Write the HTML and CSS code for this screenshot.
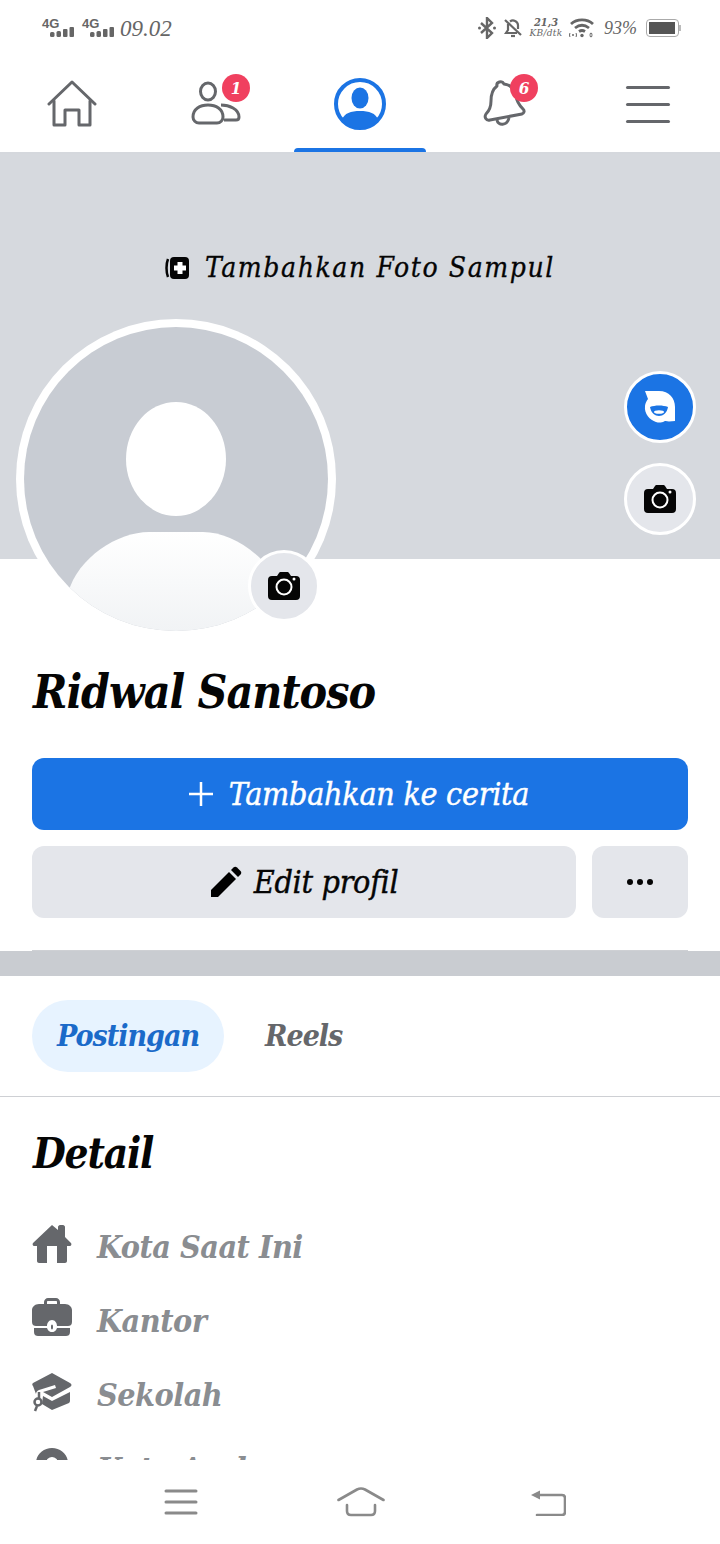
FILE: index.html
```html
<!DOCTYPE html>
<html lang="en">
<head>
  <meta charset="UTF-8">
  <title>Ridwal Santoso</title>
  <link rel="stylesheet" href="styles.css">
</head>
<body>

  <div class="screen">
    <div class="content">

      <div class="status-bar">
        <div class="status-left">
          <div class="sim"><span class="sim-label">4G</span>
            <svg class="sim-bars" width="24" height="10" viewBox="0 0 24 10"><rect x="0" y="5" width="4.500" height="5" rx="1.500"/><rect x="6.500" y="4" width="4.500" height="6" rx="1.500"/><rect x="13" y="2" width="4.500" height="8" rx="1"/><rect x="19.500" y="0" width="4.500" height="10" rx="1"/></svg>
          </div>
          <div class="sim"><span class="sim-label">4G</span>
            <svg class="sim-bars" width="24" height="10" viewBox="0 0 24 10"><rect x="0" y="5" width="4.500" height="5" rx="1.500"/><rect x="6.500" y="4" width="4.500" height="6" rx="1.500"/><rect x="13" y="2" width="4.500" height="8" rx="1"/><rect x="19.500" y="0" width="4.500" height="10" rx="1"/></svg>
          </div>
          <span class="clock">09.02</span>
        </div>
        <div class="status-right">
          <svg width="18" height="22" viewBox="0 0 18 22" fill="none" stroke="#666" stroke-width="2.400"><path d="M3 6l11 10-5 5V1l5 5L3 16"/><circle cx="1.500" cy="11" r="1.500" fill="#666" stroke="none"/><circle cx="16.500" cy="11" r="1.500" fill="#666" stroke="none"/></svg>
          <svg width="18" height="20" viewBox="0 0 18 20" fill="none" stroke="#666" stroke-width="2.200"><path d="M4 6v6l-2 3h11M6 3.500A5 5 0 0 1 14 7v4"/><path d="M1 2l16 15"/><path d="M7 18h4"/></svg>
          <div class="speed"><span>21,3</span><span>KB/dtk</span></div>
          <svg width="26" height="20" viewBox="0 0 26 20" fill="none" stroke="#666" stroke-width="2.800"><path d="M2 6C8 .5 18 .5 24 6"/><path d="M6 10c4.500-3.500 9.500-3.500 14 0"/><path d="M10 13.500c2-1.300 4-1.300 6 0"/><circle cx="13" cy="17.500" r="1.700" fill="#666" stroke="none"/><circle cx="4" cy="17" r="1" fill="#666" stroke="none"/><path d="M1 15c-.6 1.300-.6 2.700 0 4M7 15c.6 1.300.6 2.700 0 4" stroke-width="1"/><path d="M22 14.500l2 2h-4zM22 19.500l2-2h-4z" fill="#666" stroke="none"/></svg>
          <span class="battery-text">93%</span>
          <div class="battery"><div class="battery-fill"></div></div>
        </div>
      </div>

      <nav class="top-nav">
        <div class="nav-item">
          <svg width="50" height="48" viewBox="0 0 50 48" fill="none" stroke="#65676b" stroke-width="3" stroke-linejoin="round" stroke-linecap="round"><path d="M2 24L25 2l23 22"/><path d="M7 21v24h11V30h14v15h11V21"/></svg>
        </div>
        <div class="nav-item">
          <svg width="52" height="48" viewBox="0 0 52 48" fill="none" stroke="#65676b" stroke-width="3"><ellipse cx="18" cy="11.500" rx="7.500" ry="8.500"/><path d="M9 43a6 6 0 0 1-6-6c0-8 7-12 15-12s15 4 15 12a6 6 0 0 1-6 6z"/><path d="M31 25c8 0 18 4 18 12 0 2-1 3-3 3H34"/></svg>
          <span class="badge badge-friends">1</span>
        </div>
        <div class="nav-item active">
          <svg width="54" height="54" viewBox="0 0 54 54"><circle cx="27" cy="27" r="24" fill="none" stroke="#1b74e4" stroke-width="4"/><ellipse cx="27" cy="21" rx="8.500" ry="10.500" fill="#1b74e4"/><path d="M9 43c2-7 9-9 18-9s16 2 18 9c-4 5-11 8-18 8s-14-3-18-8z" fill="#1b74e4"/></svg>
        </div>
        <div class="nav-item">
          <svg width="48" height="52" viewBox="0 0 48 52" fill="none" stroke="#65676b" stroke-width="3" stroke-linejoin="round"><path d="M17 8c-1-4 5-6 7-2 8 1 11 6 12 12 1 7 4 10 7 13 2 2 1 4-1 5L10 42c-4 1-6-3-4-6 4-4 5-7 5-13 0-7 2-12 6-15z"/><path d="M17 42c1 6 10 6 12-2"/></svg>
          <span class="badge badge-bell">6</span>
        </div>
        <div class="nav-item">
          <div class="burger"><span></span><span></span><span></span></div>
        </div>
      </nav>

      <section class="cover">
        <div class="cover-label">
          <svg width="24" height="24" viewBox="0 0 24 24"><path d="M3 3C1 8 1 16 3 21" fill="none" stroke="#050505" stroke-width="2.500"/><rect x="5" y="1" width="19" height="22" rx="4" fill="#050505"/><path d="M12.500 6h5v3.500H21v5h-3.500V18h-5v-3.500H9v-5h3.500z" fill="#fff"/></svg>
          <span>Tambahkan Foto Sampul</span>
        </div>

        <div class="avatar">
          <svg width="304" height="304" viewBox="0 0 304 304">
            <defs>
              <clipPath id="avatarClip"><circle cx="152" cy="152" r="152"/></clipPath>
              <linearGradient id="bodyFade" x1="0" y1="0" x2="0" y2="1"><stop offset="0" stop-color="#fff"/><stop offset="1" stop-color="#f1f3f5"/></linearGradient>
            </defs>
            <g clip-path="url(#avatarClip)">
              <rect width="304" height="304" fill="#c8ccd3"/>
              <ellipse cx="152" cy="132" rx="50" ry="57" fill="#fff"/>
              <path d="M44 304v-38c10-36 50-61 81-61h54c30 0 66 25 81 61v38z" fill="url(#bodyFade)"/>
            </g>
          </svg>
        </div>
        <div class="camera-badge">
          <svg class="camera-icon" width="32" height="28" viewBox="0 0 32 28"><path d="M4 4h5l2-3c.5-.7 1-1 2-1h6c1 0 1.500.3 2 1l2 3h5a4 4 0 0 1 4 4v16a4 4 0 0 1-4 4H4a4 4 0 0 1-4-4V8a4 4 0 0 1 4-4z"/><circle cx="16" cy="15" r="7.500" fill="none" stroke="#fff" stroke-width="2"/><circle cx="26" cy="7" r="1.500" fill="#fff"/></svg>
        </div>

        <div class="cover-actions">
          <div class="round-btn round-blue">
            <svg width="34" height="34" viewBox="0 0 34 34"><path d="M2 1h14c10 0 16 7 16 16v14l-6 .5c-2 0-3-1-5 0-2 1-5 1.500-8 .5C7 30 1 24 2 16c.3-3 1.500-5 3-7C4 6 3 4 2 1z" fill="#fff"/><path d="M7 17c5-2 13-2 18 0-1 6-5 9-9 9s-8-3-9-9z" fill="#1b74e4"/><ellipse cx="16" cy="22" rx="5" ry="1.800" fill="#fff"/></svg>
          </div>
          <div class="round-btn round-grey">
            <svg class="camera-icon" width="32" height="28" viewBox="0 0 32 28"><path d="M4 4h5l2-3c.5-.7 1-1 2-1h6c1 0 1.500.3 2 1l2 3h5a4 4 0 0 1 4 4v16a4 4 0 0 1-4 4H4a4 4 0 0 1-4-4V8a4 4 0 0 1 4-4z"/><circle cx="16" cy="15" r="7.500" fill="none" stroke="#fff" stroke-width="2"/><circle cx="26" cy="7" r="1.500" fill="#fff"/></svg>
          </div>
        </div>
      </section>

      <section class="profile">
        <h1 class="name">Ridwal Santoso</h1>
        <button class="btn btn-primary">
          <svg width="24" height="24" viewBox="0 0 24 24"><path d="M12 0v24M0 12h24" stroke="#fff" stroke-width="2.500"/></svg>
          <span>Tambahkan ke cerita</span>
        </button>
        <div class="btn-row">
          <button class="btn btn-grey btn-edit">
            <svg width="32" height="32" viewBox="0 0 32 32"><path d="M1 31v-7L19 6l7 7L8 31z"/><path d="M21 4l2.500-2.500c1-1 2.500-1 3.500 0l3.500 3.500c1 1 1 2.500 0 3.500L28 11z"/></svg>
            <span>Edit profil</span>
          </button>
          <button class="btn btn-grey btn-more"><i></i><i></i><i></i></button>
        </div>
        <div class="profile-rule"></div>
      </section>

      <div class="band"></div>

      <div class="tabs">
        <span class="tab tab-active">Postingan</span>
        <span class="tab">Reels</span>
      </div>

      <section class="detail">
        <h2>Detail</h2>
        <div class="detail-row">
          <svg width="40" height="40" viewBox="0 0 40 40"><path d="M20 1l6 5V3c0-1 1-2 2-2h3c1 0 2 1 2 2v10l6 6c1 1 0 3-1 3h-3v15c0 1-1 2-2 2h-8V22h-10v17H7c-1 0-2-1-2-2V22H2c-1 0-2-2-1-3z"/></svg>
          <span>Kota Saat Ini</span>
        </div>
        <div class="detail-row">
          <svg width="40" height="40" viewBox="0 0 40 40"><path fill-rule="evenodd" d="M12 6V4c0-2 2-4 4-4h8c2 0 4 2 4 4v2h5c4 0 7 3 7 6v12c0 3-2 4-4 4H25c0-3-2-6-5-6s-5 3-5 6H4c-2 0-4-1-4-4V12c0-3 3-6 7-6zm3 0h10V4c0-.7-.4-1-1-1h-8c-.6 0-1 .3-1 1z"/><path fill-rule="evenodd" d="M2 30h13c1 3 3 4 5 4s4-1 5-4h13v4c0 3-2 4-4 4H6c-2 0-4-1-4-4zM20 26c1.500 0 2 1.500 2 3.500S21.500 33 20 33s-2-1.500-2-3.500.5-3.500 2-3.500z"/><path fill="#fff" d="M20 24c2 0 3.500 2 3.500 5S22 34 20 34s-3.500-2-3.500-5S18 24 20 24zm0 2.500c-.8 0-1 1-1 2.500s.2 2.500 1 2.500 1-1 1-2.500-.2-2.500-1-2.500z"/></svg>
          <span>Kantor</span>
        </div>
        <div class="detail-row">
          <svg width="40" height="40" viewBox="0 0 40 40"><path d="M20 1l18 10c2 1 2 3 0 4L20 25l-9-5 13-4-1-3-16 5c-2 1-3 2-3 4L1 14c-1-1-1-2 0-3z"/><path d="M11 24l9 5 18-9v8c0 1 0 2-1 3L20 38l-10-6z"/><path d="M7 20v6" fill="none" stroke="#65676b" stroke-width="2.500"/><circle cx="6" cy="30" r="3.500" fill="none" stroke="#65676b" stroke-width="2.500"/><path d="M5 34l-2 5" fill="none" stroke="#65676b" stroke-width="2.500"/></svg>
          <span>Sekolah</span>
        </div>
        <div class="detail-row">
          <svg width="40" height="40" viewBox="0 0 40 40"><path fill-rule="evenodd" d="M20 2c9 0 16 7 16 15 0 10-10 18-16 22C14 35 4 27 4 17 4 9 11 2 20 2zm0 9a6 6 0 1 0 0 12 6 6 0 0 0 0-12z"/></svg>
          <span>Kota Asal</span>
        </div>
      </section>

    </div>

    <div class="system-nav">
      <svg width="34" height="26" viewBox="0 0 34 26" fill="none" stroke="#8a8a8a" stroke-width="3" stroke-linecap="round"><path d="M2 2h30M2 13h30M2 24h30"/></svg>
      <svg class="system-home" width="48" height="30" viewBox="0 0 48 30" fill="none" stroke="#8a8a8a" stroke-width="2.600" stroke-linecap="round" stroke-linejoin="round"><path d="M1.500 13L20 2.500c3-1.500 5-1.500 8 0L46.500 13"/><path d="M10 18v6c0 3 2 4 4 4h20c2 0 4-1 4-4v-6"/></svg>
      <svg width="36" height="28" viewBox="0 0 36 28" fill="none" stroke="#8a8a8a" stroke-width="2.600" stroke-linecap="round" stroke-linejoin="round"><path d="M6 7h26c2 0 3 1 3 3v14c0 2-1 3-3 3H7"/><path d="M1 7l9-4.500v9z" fill="#8a8a8a" stroke="none"/></svg>
    </div>
  </div>

</body>
</html>
```

FILE: styles.css
```css
* {
  box-sizing: border-box;
}

body {
  margin: 0;
  background-color: #fff;
  color: #050505;
  font-family: 'DejaVu Serif Condensed', 'DejaVu Serif', serif;
  font-style: italic;
}

.screen {
  width: 720px;
  height: 1544px;
  display: flex;
  flex-direction: column;
  overflow: hidden;
}

.content {
  height: 1460px;
  overflow: hidden;
}

/* status bar */
.status-bar {
  height: 56px;
  padding: 0 40px 0 42px;
  display: flex;
  justify-content: space-between;
  align-items: center;
  color: #666;
}

.status-left, .status-right {
  display: flex;
  align-items: center;
}

.sim {
  width: 40px;
  height: 24px;
  position: relative;
}

.sim-label {
  position: absolute;
  left: 0;
  top: 0;
  font: bold 13px 'Liberation Sans', sans-serif;
  color: #666;
}

.sim-bars {
  position: absolute;
  left: 8px;
  top: 11px;
  fill: #666;
}

.clock {
  margin: 2px 0 0 -2px;
  font-family: 'Liberation Serif', serif;
  font-size: 23px;
}

.status-right {
  gap: 8px;
}

.speed {
  width: 34px;
  margin: 0 -2px 0 -1px;
  display: flex;
  flex-direction: column;
  align-items: center;
  font-size: 11px;
  font-weight: bold;
  line-height: 10px;
}

.speed span:last-child {
  font-size: 10px;
  font-weight: normal;
  letter-spacing: .3px;
}

.battery-text {
  margin: 0 1px;
  font-family: 'Liberation Serif', serif;
  font-size: 18px;
}

.battery {
  position: relative;
  width: 33px;
  height: 18px;
  margin-right: 1px;
  padding: 2px;
  border: 1px solid #aaa;
  border-radius: 4px;
}

.battery::after {
  content: '';
  position: absolute;
  right: -3px;
  top: 5px;
  width: 2px;
  height: 6px;
  background-color: #bbb;
}

.battery-fill {
  width: 26px;
  height: 12px;
  background-color: #555;
}

/* tab bar */
.top-nav {
  height: 98px;
  display: grid;
  grid-template-columns: repeat(5, 1fr);
  border-bottom: 2px solid #d5d8dd;
}

.nav-item {
  position: relative;
  display: flex;
  align-items: center;
  justify-content: center;
}

.nav-item.active::after {
  content: '';
  position: absolute;
  left: 6px;
  right: 6px;
  bottom: 0;
  height: 4px;
  background-color: #1b74e4;
  border-radius: 4px 4px 0 0;
}

.badge {
  position: absolute;
  top: 18px;
  width: 28px;
  height: 28px;
  border-radius: 50%;
  background-color: #f0405f;
  color: #fff;
  font-size: 17px;
  font-weight: bold;
  line-height: 28px;
  text-align: center;
}

.badge-friends {
  left: 78px;
}

.badge-bell {
  left: 78px;
}

.burger {
  width: 44px;
  display: flex;
  flex-direction: column;
  gap: 14px;
}

.burger span {
  height: 3px;
  background-color: #65676b;
  border-radius: 2px;
}

/* cover */
.cover {
  position: relative;
  height: 405px;
  background-color: #d6d9de;
  padding-top: 96px;
}

.cover-label {
  display: flex;
  justify-content: center;
  align-items: center;
  gap: 16px;
  font-size: 28px;
  line-height: 36px;
  letter-spacing: 1.6px;
  -webkit-text-stroke: .3px #050505;
}

.avatar {
  position: absolute;
  left: 16px;
  top: 165px;
  width: 320px;
  height: 320px;
  padding: 8px;
  border-radius: 50%;
  background-color: #fff;
  line-height: 0;
}

.camera-badge {
  position: absolute;
  left: 248px;
  top: 396px;
  width: 72px;
  height: 72px;
  border: 3px solid #fff;
  border-radius: 50%;
  background-color: #e4e6eb;
  display: flex;
  align-items: center;
  justify-content: center;
}

.camera-icon {
  fill: #050505;
}

.cover-actions {
  position: absolute;
  right: 24px;
  top: 217px;
  display: flex;
  flex-direction: column;
  gap: 20px;
}

.round-btn {
  width: 72px;
  height: 72px;
  border: 3px solid #fff;
  border-radius: 50%;
  display: flex;
  align-items: center;
  justify-content: center;
}

.round-blue {
  background-color: #1b74e4;
}

.round-grey {
  background-color: #e4e6eb;
}

/* name and buttons */
.profile {
  padding: 103px 32px 0;
}

.name {
  margin: 0 0 36px 1px;
  font-size: 46px;
  line-height: 60px;
  font-weight: bold;
  letter-spacing: -1px;
}

.btn {
  width: 100%;
  height: 72px;
  border: none;
  border-radius: 12px;
  display: flex;
  align-items: center;
  justify-content: center;
  gap: 16px;
  font-family: inherit;
  font-style: italic;
  font-size: 32px;
  letter-spacing: -.3px;
  -webkit-text-stroke: .4px;
}

.btn-primary {
  padding-left: 4px;
  background-color: #1b74e4;
  color: #fff;
}

.btn-grey {
  background-color: #e4e6eb;
  color: #050505;
}

.btn-row {
  margin-top: 16px;
  display: flex;
  gap: 16px;
}

.btn-edit {
  flex: 1;
  gap: 12px;
}

.btn-more {
  width: 96px;
  gap: 4px;
}

.btn-more i {
  width: 6px;
  height: 6px;
  border-radius: 50%;
  background-color: #050505;
}

.profile-rule {
  margin-top: 32px;
  height: 1px;
  background-color: #ced0d4;
}

.band {
  height: 25px;
  background-color: #c9ccd1;
}

/* tabs */
.tabs {
  height: 121px;
  padding: 24px 32px;
  display: flex;
  gap: 41px;
  border-bottom: 1px solid #ced0d4;
}

.tab {
  height: 72px;
  font-size: 30px;
  font-weight: bold;
  line-height: 72px;
  letter-spacing: -1px;
  color: #65676b;
}

.tab-active {
  padding: 0 25px;
  border-radius: 36px;
  background-color: #e7f3ff;
  color: #1b6ac9;
}

/* details */
.detail {
  padding: 25px 32px 0;
}

.detail h2 {
  margin: 0 0 21px 1px;
  font-size: 42px;
  line-height: 64px;
  font-weight: bold;
  letter-spacing: -1.200px;
}

.detail-row {
  height: 74px;
  display: flex;
  align-items: center;
  gap: 25px;
  font-size: 32px;
  font-weight: bold;
  letter-spacing: -.5px;
  color: #8a8d91;
}

.detail-row span {
  margin-top: 6px;
}

.detail-row svg {
  flex-shrink: 0;
  fill: #65676b;
}

/* android buttons */
.system-nav {
  height: 84px;
  padding: 0 154px 0 164px;
  display: flex;
  justify-content: space-between;
  align-items: center;
  background-color: #fff;
}

.system-home {
  margin-right: 6px;
}
```
